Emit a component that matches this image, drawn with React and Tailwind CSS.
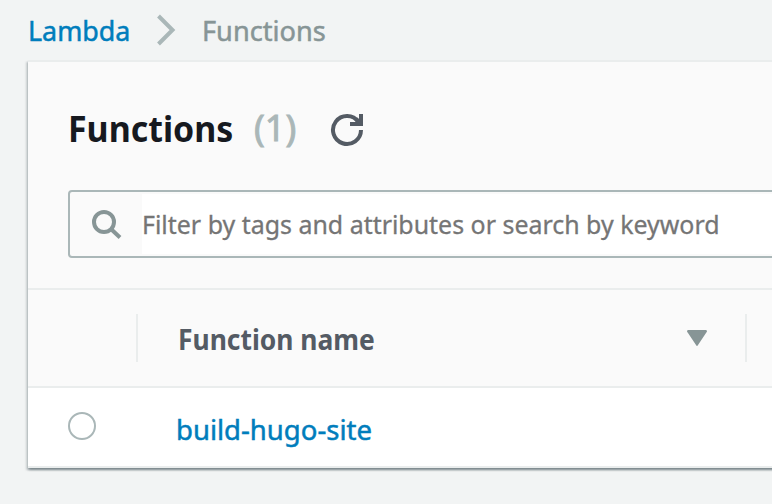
export default function App() {
  return (
    <div className="h-[504px] w-[772px] overflow-hidden bg-[#f2f4f4] font-['Noto_Sans',sans-serif]">
      <nav className="flex h-[60px] items-start whitespace-nowrap pl-7 pt-[10px] text-[28px] leading-10 [-webkit-text-stroke:0.5px]">
        <a className="w-[128px] origin-left scale-x-[0.96] text-[#007dbc]">Lambda</a>
        <svg className="mt-1 h-8 w-[20px]" viewBox="0 0 20 32" fill="none" stroke="#aab7b8" strokeWidth="4">
          <path d="M2.5 2 16.5 16 2.5 30" />
        </svg>
        <span className="ml-[26px] origin-left scale-x-[0.97] text-[#879596]">Functions</span>
      </nav>
      <main className="ml-7 h-[408px] w-[800px] border-t-2 border-[#eaeded] bg-[#fafafa] shadow-[0_2px_2px_0_rgba(0,28,36,0.3),2px_2px_2px_0_rgba(0,28,36,0.15),-2px_2px_2px_0_rgba(0,28,36,0.15)]">
        <header className="flex h-[128px] items-start whitespace-nowrap pl-10 pt-[42px] text-4xl leading-[50px]">
          <h1 className="w-[186px] origin-left scale-x-[0.942] font-bold text-[#16191f]">Functions</h1>
          <span className="mt-[-1px] w-[76px] text-[#aab7b8] [-webkit-text-stroke:0.9px]">(1)</span>
          <svg className="mt-2 h-9 w-9" viewBox="0 0 36 36" fill="none" stroke="#545b64" strokeWidth="4">
            <path d="M31 18A14 14 0 1 1 28.5 10" />
            <path d="M31 2V12H20" />
            <path d="M26 7 31 12" />
          </svg>
        </header>
        <div className="ml-10 flex h-[68px] items-center rounded border-2 border-[#aab7b8] bg-[#fafafa] py-[2px]">
          <div className="flex w-[72px] justify-center pl-0.5">
            <svg className="h-8 w-8" viewBox="0 0 32 32" fill="none" stroke="#879596" strokeWidth="4">
              <circle cx="13" cy="14" r="10" />
              <path d="m20 21 9 8.5" />
            </svg>
          </div>
          <div className="h-full flex-1 whitespace-nowrap bg-white text-[26px] leading-[60px] text-[#757575] [-webkit-text-stroke:0.3px]">
            <span className="inline-block origin-left scale-x-[0.959]">Filter by tags and attributes or search by keyword</span>
          </div>
        </div>
        <div className="mt-[30px] flex h-[100px] items-center whitespace-nowrap border-y-2 border-[#eaeded]">
          <div className="h-12 w-[110px] border-r-2 border-[#eaeded]" />
          <div className="flex h-12 w-[609px] items-center border-r-2 border-[#eaeded] pl-10">
            <span className="mt-0.5 w-[509px] origin-left scale-x-[0.943] text-[28px] font-bold text-[#545b64]">Function name</span>
            <svg className="h-4 w-5" viewBox="0 0 20 16" fill="#879596">
              <path d="M1 0H19Q21 1 19 3L11 15Q10 17 9 15L1 3Q-1 1 1 0Z" />
            </svg>
          </div>
        </div>
        <div className="flex h-[80px] items-start whitespace-nowrap border-b-2 border-[#eaeded] bg-white pl-10 pt-6">
          <span className="h-7 w-7 rounded-full border-2 border-[#aab7b8]" />
          <a className="ml-20 mt-[-4px] inline-block origin-left scale-x-[0.982] text-[28px] leading-[42px] text-[#007dbc] [-webkit-text-stroke:0.5px]">build-hugo-site</a>
        </div>
      </main>
    </div>
  );
}
